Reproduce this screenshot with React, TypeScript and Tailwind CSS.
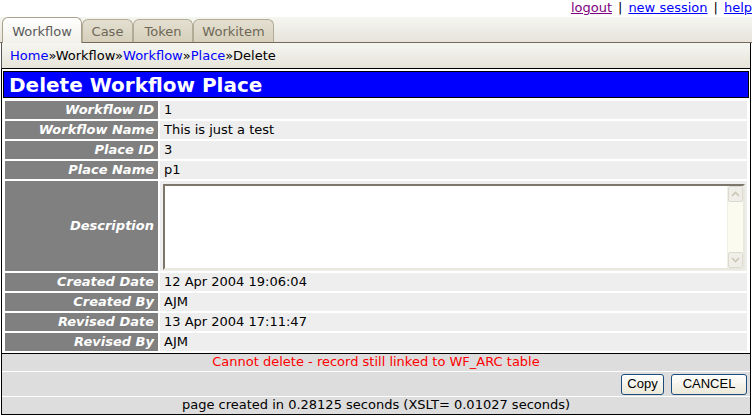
import React from 'react'

// ─── Data ──────────────────────────────────────────────────────

const rowsTop = [
  { label: 'Workflow ID', value: '1' },
  { label: 'Workflow Name', value: 'This is just a test' },
  { label: 'Place ID', value: '3' },
  { label: 'Place Name', value: 'p1' },
]

const rowsBottom = [
  { label: 'Created Date', value: '12 Apr 2004 19:06:04' },
  { label: 'Created By', value: 'AJM' },
  { label: 'Revised Date', value: '13 Apr 2004 17:11:47' },
  { label: 'Revised By', value: 'AJM' },
]

const tabs = [
  { name: 'Workflow', width: 'w-[80px]', active: true },
  { name: 'Case', width: 'w-[51px]', active: false },
  { name: 'Token', width: 'w-[60px]', active: false },
  { name: 'Workitem', width: 'w-[81px]', active: false },
]

// ─── Pieces ────────────────────────────────────────────────────

function Row({ label, value }: { label: string; value: string }) {
  return (
    <tr>
      <td className="h-[18px] w-[153px] p-0 pr-[4px] bg-[#808080] text-right text-white font-bold italic whitespace-nowrap">
        {label}
      </td>
      <td className="h-[18px] p-0 pl-[4px] bg-[#eeeeee] text-black whitespace-nowrap">{value}</td>
    </tr>
  )
}

function Chevron({ up }: { up?: boolean }) {
  return (
    <svg width="9" height="6" viewBox="0 0 9 6" className="block">
      <path
        d={up ? 'M1 5 L4.5 1.5 L8 5' : 'M1 1 L4.5 4.5 L8 1'}
        fill="none"
        stroke="#c9c6b6"
        strokeWidth="1.6"
      />
    </svg>
  )
}

function FakeTextarea() {
  return (
    <div className="ml-[3px] mr-[2px] h-[86px] flex border-2 border-t-[#7d766a] border-l-[#7d766a] border-r-[#ebe9df] border-b-[#ebe9df] bg-white">
      <textarea className="flex-1 resize-none outline-none border-0 bg-white" defaultValue="" />
      <div className="w-[16px] flex flex-col justify-between bg-[#fbfbef] border-l border-[#f1f0e6]">
        <div className="h-[16px] flex items-center justify-center rounded-[2px] bg-[#efeee8] border border-[#dcdad0]">
          <Chevron up />
        </div>
        <div className="h-[16px] flex items-center justify-center rounded-[2px] bg-[#efeee8] border border-[#dcdad0]">
          <Chevron />
        </div>
      </div>
    </div>
  )
}

// ─── Page ──────────────────────────────────────────────────────

export default function App() {
  return (
    <div className="w-[752px] h-[416px] bg-white text-[13px] leading-[16px] font-['DejaVu_Sans',Verdana,sans-serif] overflow-hidden">
      {/* session links */}
      <div className="h-[17px] flex justify-end items-start whitespace-nowrap">
        <a href="#" className="text-[#800080] underline">logout</a>
        <span className="px-[6px] text-black">|</span>
        <a href="#" className="text-[#0000ff] underline">new session</a>
        <span className="px-[6px] text-black">|</span>
        <a href="#" className="text-[#0000ff] underline">help</a>
      </div>

      {/* tabs */}
      <div className="h-[26px] flex items-end pl-[2px] border-b border-[#76685a] bg-gradient-to-b from-[#f6f6f1] to-[#e6e4da]">
        {tabs.map((t) =>
          t.active ? (
            <div
              key={t.name}
              className={`${t.width} h-[26px] -mb-px flex items-center justify-center pt-[3px] rounded-t-[6px] border border-b-0 border-[#a8a18b] bg-gradient-to-b from-white to-[#f1f0ea] text-[#5a5a5a]`}
            >
              {t.name}
            </div>
          ) : (
            <div
              key={t.name}
              className={`${t.width} h-[23px] flex items-center justify-center pt-[2px] rounded-t-[6px] border border-b-0 border-[#b2ab95] bg-gradient-to-b from-[#e4e0d1] to-[#d5cfbb] text-[#6e6756]`}
            >
              {t.name}
            </div>
          )
        )}
      </div>

      {/* breadcrumb */}
      <div className="h-[26px] ml-[1px] mr-[1px] flex items-center pl-[8px] border-l border-r border-b border-l-[#555] border-r-black border-b-black bg-gradient-to-b from-[#f6f6f1] to-[#e6e4da]">
        <a href="#" className="text-[#0000ff]">Home</a>
        <span>»Workflow»</span>
        <a href="#" className="text-[#0000ff]">Workflow</a>
        <span>»</span>
        <a href="#" className="text-[#0000ff]">Place</a>
        <span>»Delete</span>
      </div>

      {/* main form */}
      <div className="ml-[1px] mr-[1px] border-l border-r border-b border-black">
        <div className="px-[1px] pt-[2px]">
          <div className="h-[27px] flex items-center pl-[5px] border border-black bg-[#0000ff] text-white font-bold text-[20px] leading-[24px]">
            Delete Workflow Place
          </div>
          <table className="w-full mt-[1px] border-separate border-spacing-[2px]">
            <tbody>
              {rowsTop.map((r) => (
                <Row key={r.label} {...r} />
              ))}
              <tr>
                <td className="h-[90px] w-[153px] p-0 pr-[4px] bg-[#808080] text-right text-white font-bold italic">
                  Description
                </td>
                <td className="h-[90px] p-0 pt-[1px] bg-[#eeeeee]">
                  <FakeTextarea />
                </td>
              </tr>
              {rowsBottom.map((r) => (
                <Row key={r.label} {...r} />
              ))}
            </tbody>
          </table>
        </div>

        <div className="border-t border-black">
          <div className="h-[18px] bg-[#dddddd] border-b border-white text-center text-[#ff0000]">
            Cannot delete - record still linked to WF_ARC table
          </div>
          <div className="h-[25px] flex items-center justify-end gap-[7px] pr-[3px] bg-[#dddddd] border-b border-white">
            <button className="h-[21px] w-[43px] rounded-[3px] border border-[#1c4b7e] bg-gradient-to-b from-white to-[#ece9d8] text-black text-[13px] font-['Liberation_Sans',Arial,sans-serif]">
              Copy
            </button>
            <button className="h-[21px] w-[76px] rounded-[3px] border border-[#1c4b7e] bg-gradient-to-b from-white to-[#ece9d8] text-black text-[13px] font-['Liberation_Sans',Arial,sans-serif]">
              CANCEL
            </button>
          </div>
          <div className="h-[17px] bg-[#dddddd] text-center text-black">
            page created in 0.28125 seconds (XSLT= 0.01027 seconds)
          </div>
        </div>
      </div>
    </div>
  )
}
